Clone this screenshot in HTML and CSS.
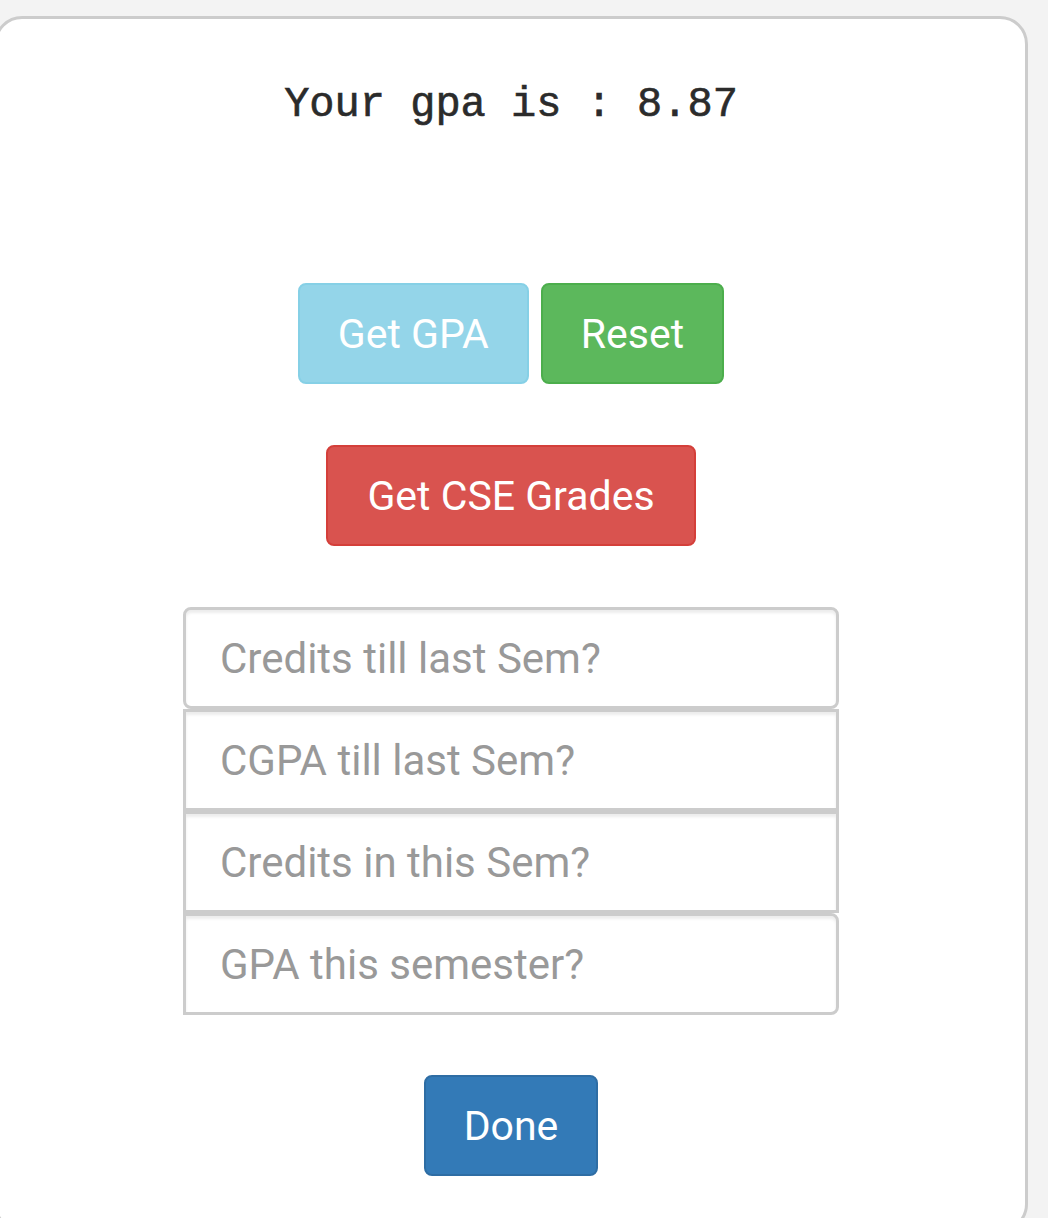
FILE: index.html
```html
<!DOCTYPE html>
<html lang="en">
<head>
<meta charset="utf-8">
<title>GPA Calculator</title>
<link rel="stylesheet" href="styles.css">
</head>
<body>
<div class="card">
  <h1 class="result">Your gpa is : 8.87</h1>
  <div class="btn-row">
    <button class="btn btn-info" disabled>Get GPA</button>
    <button class="btn btn-success">Reset</button>
  </div>
  <div class="btn-row row-cse">
    <button class="btn btn-danger">Get CSE Grades</button>
  </div>
  <div class="inputs">
    <input class="field field-first" type="text" placeholder="Credits till last Sem?">
    <input class="field" type="text" placeholder="CGPA till last Sem?">
    <input class="field" type="text" placeholder="Credits in this Sem?">
    <input class="field field-last" type="text" placeholder="GPA this semester?">
  </div>
  <div class="btn-row row-done">
    <button class="btn btn-primary">Done</button>
  </div>
</div>
</body>
</html>
```

FILE: styles.css
```css
html, body {
  margin: 0;
  padding: 0;
  background: #f3f3f3;
  overflow: hidden;
  height: 1218px;
}

.card {
  box-sizing: border-box;
  margin: 16px 0 0 -6px;
  width: 1034px;
  height: 1216px;
  background: #fff;
  border: 3px solid #cccccc;
  border-radius: 28px;
  display: flex;
  flex-direction: column;
  align-items: center;
  padding-top: 61px;
}

.result {
  margin: 0;
  font-family: "Courier New", "Liberation Mono", monospace;
  font-weight: normal;
  font-size: 42px;
  line-height: 50px;
  color: #2b2b2b;
  -webkit-text-stroke: 0.6px #2b2b2b;
}

.btn-row {
  display: flex;
  gap: 12px;
  justify-content: center;
  margin-top: 153px;
}

.row-cse {
  margin-top: 61px;
}

.row-done {
  margin-top: 60px;
}

.btn {
  box-sizing: border-box;
  height: 101px;
  padding: 0 38px;
  border: 2px solid transparent;
  border-radius: 8px;
  font-family: Roboto, "Noto Sans", sans-serif;
  font-size: 41px;
  color: #fff;
  display: inline-flex;
  align-items: center;
  justify-content: center;
}

.btn-info {
  background: #5bc0de;
  border-color: #46b8da;
  opacity: 0.65;
}

.btn-success {
  background: #5cb85c;
  border-color: #4cae4c;
}

.btn-danger {
  background: #d9534f;
  border-color: #d43f3a;
  padding: 0 39px;
}

.btn-primary {
  background: #337ab7;
  border-color: #2e6da4;
}

.inputs {
  margin-top: 61px;
  width: 656px;
  display: flex;
  flex-direction: column;
}

.field {
  box-sizing: border-box;
  width: 656px;
  height: 102px;
  margin: 0;
  border: 3px solid #cccccc;
  border-radius: 0;
  box-shadow: inset 0 3px 3px rgba(0, 0, 0, 0.075);
  padding: 0 34px;
  font-family: Roboto, "Noto Sans", sans-serif;
  font-size: 42px;
  color: #555;
  background: #fff;
  outline: none;
}

.field::placeholder {
  color: #999;
}

.field-first {
  border-radius: 8px;
}

.field-last {
  border-radius: 0 8px 8px 0;
}
```
